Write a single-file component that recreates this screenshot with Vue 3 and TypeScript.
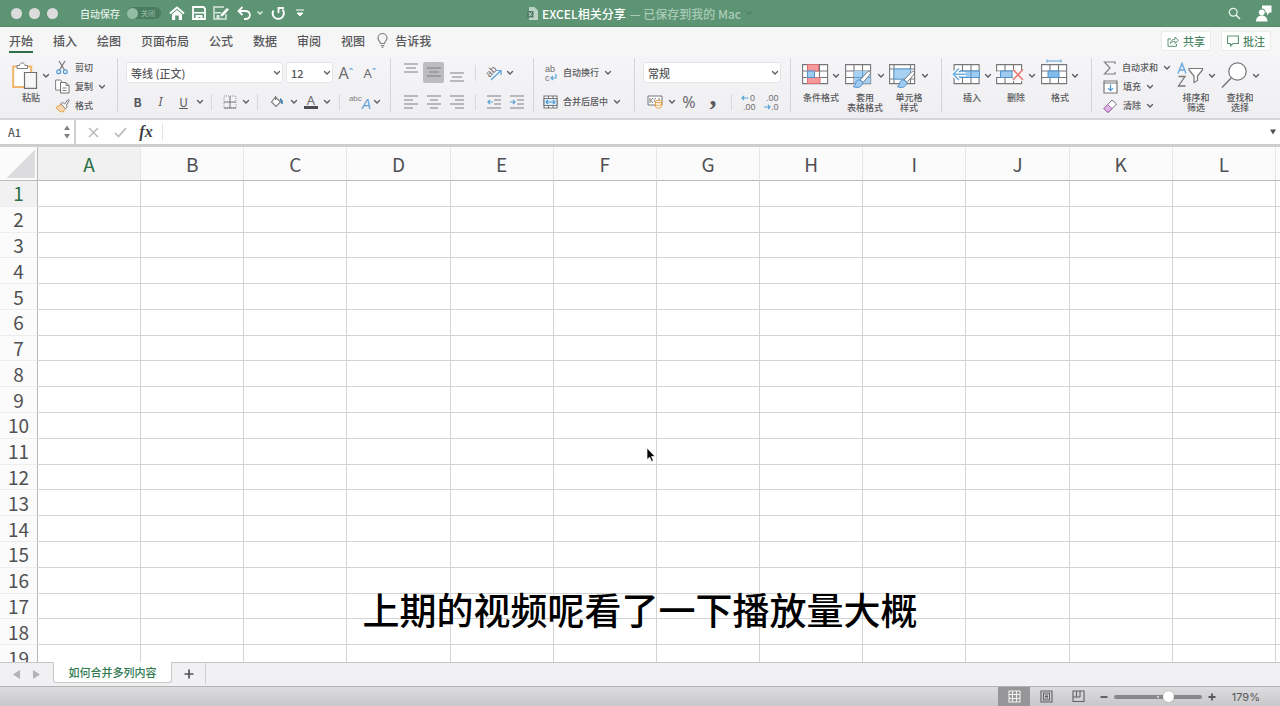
<script setup lang="ts">
import { h, ref } from 'vue'

interface Glyph {
  w: number
  h: number
  body: string
}

const grey = 'fill="none" stroke="#808083" stroke-width="1.2"'
const blue = 'fill="none" stroke="#5ba3d9" stroke-width="1.2"'
const white = 'fill="none" stroke="#fff" stroke-width="1.8"'
const table = `<path d="M.6 2.6h25v19h-25zM.6 9h25M.6 15.500h25M9 2.600v19M17.500 2.600v19" fill="#fff" stroke="#77777a" stroke-width="1.100"/>`
const brush = `<path d="M24.500 9.500c1.500 1 1 2-.5 4l-6 7-3-2.500 6.500-7c1.200-1.300 2-2.200 3-1.500z" fill="#fff" stroke="#77777a"/><path d="M15 18c-2.500-.5-4 1-4.200 3-.2 1.800-1 2.800-2.800 3.500 4 2 9 1 10-4z" fill="#9fcbf0" stroke="#4f94cc"/>`

const glyphs: Record<string, Glyph> = {
  chevron: { w: 8, h: 6, body: '<path d="M1.500 1.500 4 4l2.500-2.500" fill="none" stroke="#5c5c5f" stroke-width="1.300" stroke-linecap="round"/>' },
  chevronWhite: { w: 8, h: 6, body: '<path d="M1.500 1.500 4 4l2.500-2.500" fill="none" stroke="#e6f1ea" stroke-width="1.300"/>' },
  chevronDim: { w: 8, h: 6, body: '<path d="M1.500 1.500 4 4l2.500-2.500" fill="none" stroke="#4b8263" stroke-width="1.300"/>' },
  home: { w: 16, h: 14, body: '<path d="M1 7.500 8 1.500l7 6" fill="none" stroke="#fff" stroke-width="2"/><path d="M3 8.200 8 4l5 4.200V14H9.800V9.500H6.200V14H3z" fill="#fff"/>' },
  save: { w: 14, h: 14, body: `<path d="M1 1h10.500L13 2.500V13H1z" ${white}/><path d="M2 6h10v1.500H2zM3.500 9h7v4h-2v-2h-2v2h-3z" fill="#fff"/>` },
  saveEdit: { w: 17, h: 14, body: '<path d="M13 8v5H1V1h10" fill="none" stroke="#d7e8dd" stroke-width="1.500"/><path d="M2 6h6v1.500H2zM3.500 9h3v4h-3z" fill="#d7e8dd"/><path d="m7 11 .8-3L14 1.500l2.200 2.200-6.200 6.500z" fill="#fff" stroke="#5d9474" stroke-width=".6"/>' },
  undo: { w: 15, h: 14, body: `<path d="M5.500 1 1.500 5l4 4M1.500 5H8c6.500 0 6.500 8 .5 8H7" ${white}/>` },
  redo: { w: 15, h: 14, body: `<path d="M2.500 4.500C0 8.500 3 12.800 7 12.800c5.500 0 7.500-6 4.500-9.300M7.500 7V2h5.500" ${white}/>` },
  more: { w: 8, h: 8, body: '<path d="M0 1h8M1 4h6L4 7z" fill="#fff" stroke="#fff"/>' },
  file: { w: 11, h: 13, body: '<path d="M2 0h5.500L11 3.500V13H2z" fill="#b9d2c4"/><path d="M0 4h6.500v6.500H0z" fill="#537c65"/><path d="m2 5.500 2.500 3.500m0-3.500L2 9" stroke="#c8ddd0" fill="none"/>' },
  search: { w: 13, h: 13, body: '<circle cx="5.200" cy="5.200" r="3.900" fill="none" stroke="#e9f3ed" stroke-width="1.300"/><path d="m8 8 4 4" stroke="#e9f3ed" stroke-width="1.600"/>' },
  person: { w: 16, h: 17, body: '<path d="M6 .500h9.500v7h-2L11 10.500v-3H9.500C9.500 4.500 8 3.500 6 3.500z" fill="#fff"/><circle cx="5.800" cy="7.300" r="2.900" fill="#fff"/><path d="M0 16.500c0-8 11.500-8 11.500 0z" fill="#fff"/>' },
  bulb: { w: 11, h: 15, body: `<path d="M3.500 10.500C3.500 8 1 8 1 5a4.500 4.500 0 0 1 9 0c0 3-2.500 3-2.500 5.500zM3.700 12.500h3.600M4.500 14.200h2" ${grey}/>` },
  share: { w: 12, h: 11, body: '<path d="M4 3H1v7.300h8.500V8" fill="none" stroke="#5f9375"/><path d="M3.500 7.500c.3-3 2-4.200 4.500-4.200V1l3.500 3.500L8 7.500V5.400c-2 0-3.300.4-4.500 2.100z" fill="none" stroke="#5f9375"/>' },
  comment: { w: 12, h: 12, body: '<path d="M.600 1h10.800v7.500H6L3.500 11V8.500H.600z" fill="none" stroke="#5f9375" stroke-width="1.100"/>' },
  paste: { w: 26, h: 27, body: '<path d="M1.200 4.500h18V25h-18z" fill="#fff" stroke="#efb568" stroke-width="2"/><path d="M5 6.500v-3h2.500C8 0 12.500 0 13 3.500h2.500v3z" fill="#fff" stroke="#808083"/><path d="M12.500 10.500h12v15.800h-12z" fill="#f7f7f8" stroke="#707073" stroke-width="1.200"/>' },
  cut: { w: 15, h: 15, body: '<path d="m4 1 5.500 9M10 1l-5.500 9" fill="none" stroke="#77777a" stroke-width="1.200"/><circle cx="3.700" cy="11.700" r="1.900" fill="none" stroke="#4e98d2" stroke-width="1.200"/><circle cx="10.300" cy="11.700" r="1.900" fill="none" stroke="#4e98d2" stroke-width="1.200"/>' },
  copy: { w: 15, h: 15, body: '<path d="M.600 1h5l1 1v9h-6z" fill="#fff" stroke="#808083"/><path d="M5.500 3.500h5.500l3 3V14H5.500z" fill="#fff" stroke="#707073"/><path d="M11 3.500v3h3M7.500 9h4M7.500 11.500h4" fill="none" stroke="#808083"/>' },
  painter: { w: 15, h: 15, body: '<path d="m1 9.500 5.500-3.500 4 4.500L8 14c-2 0-4.500-1-7-4.500z" fill="#f9d9ab" stroke="#e6a14e"/><path d="m5.700 5.700 2-1.200 2 1.500L13 1.500l1.200 1L11.500 7l.5 2.200-1.500 1.500z" fill="#fff" stroke="#77777a"/>' },
  borders: { w: 14, h: 14, body: `<path d="M1 1h12v12H1z" fill="none" stroke="#999" stroke-dasharray="1 1"/><path d="M1 13h12M7 1v12M1 7h12" fill="none" stroke="#77777a"/>` },
  bucket: { w: 14, h: 13, body: '<path d="m5.500 2 5 5-4.500 4.500L1.500 7zM5.500 5V1" fill="#fff" stroke="#77777a" stroke-width="1.100"/><path d="M10.500 3.500c2 1.500 2.200 4 1.700 5.500L11 6.500z" fill="#3d80b8" stroke="#3d80b8"/>' },
  top: { w: 14, h: 11, body: `<path d="M0 1h14M2 5h10M0 9h14" ${grey}/>` },
  left: { w: 14, h: 14, body: `<path d="M0 1h14M0 5h9M0 9h14M0 13h9" ${grey}/>` },
  center: { w: 14, h: 14, body: `<path d="M0 1h14M3 5h8M0 9h14M3 13h8" ${grey}/>` },
  right: { w: 14, h: 14, body: `<path d="M0 1h14M5 5h9M0 9h14M5 13h9" ${grey}/>` },
  outdent: { w: 14, h: 14, body: `<path d="M0 1h14M7 5h7M7 9h7M0 13h14" ${grey}/><path d="M6 7H1m2-2L1 7l2 2" ${blue}/>` },
  indent: { w: 14, h: 14, body: `<path d="M0 1h14M7 5h7M7 9h7M0 13h14" ${grey}/><path d="M0 7h5M3 5l2 2-2 2" ${blue}/>` },
  orient: { w: 18, h: 18, body: '<text x="1" y="11" transform="rotate(-45 6 8)" font-family="Liberation Sans" font-size="10" fill="#707073">ab</text><path d="m6 16 9.500-9M11.500 6.500h4.500V11" fill="none" stroke="#5ba3d9" stroke-width="1.200"/>' },
  wrap: { w: 15, h: 20, body: '<text x="2" y="9" font-family="Liberation Sans" font-size="9" fill="#707073">ab</text><text x="2" y="18" font-family="Liberation Sans" font-size="9" fill="#707073">c</text><path d="M13 11v4H8m2-2-2 2 2 2" fill="none" stroke="#5ba3d9" stroke-width="1.200"/>' },
  merge: { w: 15, h: 14, body: '<path d="M1 1h13v12H1zM5.500 1v2.500M10 1v2.500M5.500 10.500V13M10 10.500V13" fill="#fff" stroke="#77777a" stroke-width="1.100"/><path d="M1 3.500h13v7H1z" fill="#dceefb" stroke="#77777a"/><path d="M3 7h9M5 5 3 7l2 2m5-4 2 2-2 2" fill="none" stroke="#4e98d2" stroke-width="1.100"/>' },
  currency: { w: 17, h: 15, body: '<path d="M1 2h14v9H1z" fill="#fff" stroke="#77777a"/><path d="M3 4v5M6 4 4 6.500 6 9M9 4c-2 1-2 4 0 5M12 4v5" fill="none" stroke="#77777a"/><path d="M8.500 7.500v5c0 2 6 2 6 0v-5" fill="#fff5e6" stroke="#e8a04d"/><ellipse cx="11.500" cy="7.500" rx="3" ry="1.300" fill="#fff5e6" stroke="#e8a04d"/><path d="M8.500 10c0 2 6 2 6 0" fill="none" stroke="#e8a04d"/>' },
  decMore: { w: 16, h: 20, body: '<text x="9" y="9" font-family="Liberation Sans" font-size="9" fill="#707073">0</text><text x="2" y="18" font-family="Liberation Sans" font-size="9" fill="#707073">.00</text><path d="M7.500 6H1m2-2L1 6l2 2" fill="none" stroke="#5ba3d9" stroke-width="1.200"/>' },
  decLess: { w: 16, h: 20, body: '<text x="2" y="9" font-family="Liberation Sans" font-size="9" fill="#707073">.00</text><text x="7" y="18" font-family="Liberation Sans" font-size="9" fill="#707073">.0</text><path d="M0 15h6M4 13l2 2-2 2" fill="none" stroke="#5ba3d9" stroke-width="1.200"/>' },
  conditional: { w: 26, h: 27, body: `${table}<path d="M5.500 2.600h11V9h-11zM5.500 15.500H18v6H5.500z" fill="#f5999b" stroke="#dd6e72"/><path d="M5.500 9h7v6.500h-7z" fill="#9fcbf0" stroke="#4f94cc"/>` },
  tableStyle: { w: 28, h: 27, body: `${table}<path d="M9 9h16.500v12.500H9z" fill="#a8d0f2"/><path d="M9 15.500h16.500M17.500 9v12.500" stroke="#5ba3d9" fill="none"/>${brush}` },
  cellStyle: { w: 28, h: 27, body: `<path d="M.600 2.600h25v19h-25zM.600 7h25M.600 17h25M5 2.600v19M21.500 2.600v19" fill="#fff" stroke="#77777a" stroke-width="1.100"/><path d="M5 7h16.500v10H5z" fill="#a8d0f2" stroke="#5ba3d9"/>${brush}` },
  insert: { w: 28, h: 27, body: '<g transform="translate(1.500)">' + table + '<path d="M6 9h20v6.500H6z" fill="#9fcbf0" stroke="#4f94cc"/><path d="M17.500 9v6.500" stroke="#4f94cc"/></g><path d="M14 12.200H1.500M7 6.500l-5.700 5.700L7 18" fill="none" stroke="#fff" stroke-width="4"/><path d="M14 12.200H1.500M7 6.500l-5.700 5.700L7 18" fill="none" stroke="#6fb0e2" stroke-width="1.500"/>' },
  remove: { w: 28, h: 27, body: `${table}<path d="M0 9.500h4v5.500H0z" fill="#f4f3f5"/><path d="M4.500 9h11.500v6.500H4.500z" fill="#9fcbf0" stroke="#4f94cc"/><path d="M17 8h11v11H17z" fill="#f7f6f8"/><path d="m17 7.500 10 10.500M27 7.500 17 18" stroke="#e8766f" stroke-width="1.500"/>` },
  format: { w: 26, h: 27, body: `${table}<path d="M7 9h11v6.500H7z" fill="#82bcec" stroke="#4f94cc"/><path d="M6-2.500v3M20-2.500v3M6-1h14" stroke="#5ba3d9" fill="none"/>` },
  sum: { w: 14, h: 14, body: `<path d="M12 3V1H1.500l5.500 6-5.500 6H12v-2" ${grey}/>` },
  fill: { w: 15, h: 14, body: '<path d="M1 1h13v12H1z" fill="#fff" stroke="#77777a" stroke-width="1.200"/><path d="M1 3h13" stroke="#77777a"/><path d="M7.500 4.500v6M5 8.200l2.500 2.500L10 8.200" fill="none" stroke="#4e98d2" stroke-width="1.200"/>' },
  clear: { w: 15, h: 14, body: '<path d="m9 1 4.500 4L6 13H4L1 9.500z" fill="#fff" stroke="#77777a"/><path d="M4.500 5.500 9 9.500 5.700 13H4L1 9.500z" fill="#deb4e3" stroke="#ae68b7"/>' },
  sort: { w: 27, h: 27, body: '<path d="m1 11.500 4-10 4 10M2.500 8h5" fill="none" stroke="#6aaade" stroke-width="1.400"/><path d="M1.500 14.500H8L1.500 24H8.500" fill="none" stroke="#77777a" stroke-width="1.300"/><path d="M12 6.500h13.500v1.500L20.500 14v4.500L17 20.500V14L12 8z" fill="#fff" stroke="#77777a" stroke-width="1.200"/>' },
  find: { w: 27, h: 27, body: '<circle cx="16.500" cy="9.500" r="8.700" fill="#fff" stroke="#77777a" stroke-width="1.200"/><path d="M10.200 16 1 25.500" stroke="#77777a" stroke-width="1.500"/>' },
  cancel: { w: 11, h: 11, body: '<path d="m1 1 9 9m0-9-9 9" fill="none" stroke="#b9b9bb" stroke-width="1.500"/>' },
  check: { w: 13, h: 11, body: '<path d="m1 6 3.500 3.500L12 1" fill="none" stroke="#b9b9bb" stroke-width="1.600"/>' },
  spin: { w: 6, h: 14, body: '<path d="M0 5 3 .500 6 5zM0 9l3 4.500L6 9z" fill="#808083"/>' },
  down: { w: 6, h: 6, body: '<path d="M0 .500h6L3 5.500z" fill="#505053"/>' },
  prev: { w: 7, h: 9, body: '<path d="M7 0v9L0 4.500z" fill="#b3b3b5"/>' },
  next: { w: 7, h: 9, body: '<path d="M0 0v9l7-4.500z" fill="#b3b3b5"/>' },
  plus: { w: 10, h: 10, body: '<path d="M5 .500v9M.500 5h9" stroke="#555558" stroke-width="1.700"/>' },
  plusSmall: { w: 8, h: 8, body: '<path d="M4 .500v7M.500 4h7" stroke="#58585b" stroke-width="1.800"/>' },
  minusSmall: { w: 8, h: 8, body: '<path d="M.500 4h7" stroke="#58585b" stroke-width="1.800"/>' },
  gridView: { w: 13, h: 13, body: '<path d="M1 1h11v11H1zM4.500 1v11M8.500 1v11M1 4.500h11M1 8.500h11" fill="none" stroke="#f2f2f2" stroke-width="1.100"/>' },
  pageView: { w: 13, h: 13, body: '<path d="M1 1h11v11H1zM3.500 3h6v7h-6zM5 5h3M5 6.500h3M5 8h3" fill="none" stroke="#606063" stroke-width="1.100"/>' },
  breakView: { w: 13, h: 13, body: '<path d="M1 1h11v10.500H1zM4.500 1v6M8 1v6M1 7h7" fill="none" stroke="#606063" stroke-width="1.100"/>' },
  pointer: { w: 10, h: 16, body: '<path d="M1 1v11.500l2.700-2.300L5.500 14.500l1.800-.8L5.500 9.500H9z" fill="#000" stroke="#fff" stroke-width=".700"/>' }
}

const Icon = (props: { name: string }) => {
  const g = glyphs[props.name]
  return h('svg', {
    width: g.w,
    height: g.h,
    viewBox: `0 0 ${g.w} ${g.h}`,
    'aria-hidden': 'true',
    innerHTML: g.body
  })
}
Icon.props = ['name']

interface Big {
  icon: string
  lines: string[]
}

const tabs = ['开始', '插入', '绘图', '页面布局', '公式', '数据', '审阅', '视图']
const activeTab = ref('开始')
const clip = [
  { icon: 'cut', label: '剪切', menu: false },
  { icon: 'copy', label: '复制', menu: true },
  { icon: 'painter', label: '格式', menu: false }
]
const edits = [
  { icon: 'sum', label: '自动求和' },
  { icon: 'fill', label: '填充' },
  { icon: 'clear', label: '清除' }
]
const styles: Big[] = [
  { icon: 'conditional', lines: ['条件格式'] },
  { icon: 'tableStyle', lines: ['套用', '表格格式'] },
  { icon: 'cellStyle', lines: ['单元格', '样式'] }
]
const cells: Big[] = [
  { icon: 'insert', lines: ['插入'] },
  { icon: 'remove', lines: ['删除'] },
  { icon: 'format', lines: ['格式'] }
]
const finders: Big[] = [
  { icon: 'sort', lines: ['排序和', '筛选'] },
  { icon: 'find', lines: ['查找和', '选择'] }
]
const columns = 'ABCDEFGHIJKL'.split('')
const selected = ref({ col: 'A', row: 1 })
const autosave = ref(false)
const cellName = ref('A1')
const formula = ref('')
const zoom = ref(63)
</script>

<template>
  <div class="window">
    <header class="titlebar">
      <div class="title-left">
        <div class="lights"><i></i><i></i><i></i></div>
        <label class="autosave">
          <span>自动保存</span>
          <input v-model="autosave" type="checkbox">
          <span class="switch">关闭</span>
        </label>
        <div class="quick">
          <button aria-label="主页"><Icon name="home" /></button>
          <button aria-label="保存"><Icon name="save" /></button>
          <button aria-label="另存为"><Icon name="saveEdit" /></button>
          <button aria-label="撤销"><Icon name="undo" /></button>
          <button aria-label="撤销列表"><Icon name="chevronWhite" /></button>
          <button aria-label="重做"><Icon name="redo" /></button>
          <button aria-label="自定义"><Icon name="more" /></button>
        </div>
      </div>
      <div class="doc">
        <Icon name="file" />
        <strong>EXCEL相关分享</strong>
        <span>— 已保存到我的 Mac</span>
        <Icon name="chevronDim" />
      </div>
      <div class="title-right">
        <button aria-label="搜索"><Icon name="search" /></button>
        <button aria-label="帐户"><Icon name="person" /></button>
      </div>
    </header>

    <nav class="tabs">
      <button v-for="t in tabs" :key="t" :class="{ active: t === activeTab }" @click="activeTab = t">{{ t }}</button>
      <button class="tell"><Icon name="bulb" />告诉我</button>
      <div class="tab-actions">
        <button><Icon name="share" />共享</button>
        <button><Icon name="comment" />批注</button>
      </div>
    </nav>

    <section class="ribbon">
      <div class="group clipboard">
        <button class="big">
          <span class="big-icon"><Icon name="paste" /><Icon name="chevron" /></span>
          <span>粘贴</span>
        </button>
        <div class="stack">
          <button v-for="c in clip" :key="c.label" class="line">
            <Icon :name="c.icon" /><span>{{ c.label }}</span><Icon v-if="c.menu" name="chevron" />
          </button>
        </div>
      </div>

      <div class="group rows">
        <div class="row fields">
          <div class="field">
            <select aria-label="字体"><option>等线 (正文)</option></select>
            <Icon name="chevron" />
          </div>
          <div class="field">
            <select aria-label="字号"><option>12</option></select>
            <Icon name="chevron" />
          </div>
          <button class="grow" aria-label="增大字号">A<sup>ˆ</sup></button>
          <button class="shrink" aria-label="减小字号">A<sup>ˇ</sup></button>
        </div>
        <div class="row font-row">
          <button class="bold">B</button>
          <button class="italic">I</button>
          <button class="under">U</button>
          <button aria-label="下划线选项"><Icon name="chevron" /></button>
          <i class="rule"></i>
          <button aria-label="边框"><Icon name="borders" /></button>
          <button aria-label="边框选项"><Icon name="chevron" /></button>
          <i class="rule"></i>
          <button aria-label="填充颜色"><Icon name="bucket" /></button>
          <button aria-label="填充颜色选项"><Icon name="chevron" /></button>
          <button class="ink">A</button>
          <button aria-label="字体颜色选项"><Icon name="chevron" /></button>
          <i class="rule"></i>
          <button class="phonetic"><span>abc</span><em>A</em></button>
          <button aria-label="拼音选项"><Icon name="chevron" /></button>
        </div>
      </div>

      <div class="group rows">
        <div class="row align-row">
          <button class="v-top" aria-label="顶端对齐"><Icon name="top" /></button>
          <button class="pressed" aria-label="垂直居中"><Icon name="top" /></button>
          <button class="v-bottom" aria-label="底端对齐"><Icon name="top" /></button>
          <i class="rule"></i>
          <button aria-label="方向"><Icon name="orient" /></button>
          <button class="menu" aria-label="方向选项"><Icon name="chevron" /></button>
        </div>
        <div class="row align-row">
          <button aria-label="左对齐"><Icon name="left" /></button>
          <button aria-label="居中"><Icon name="center" /></button>
          <button aria-label="右对齐"><Icon name="right" /></button>
          <i class="rule"></i>
          <button aria-label="减少缩进"><Icon name="outdent" /></button>
          <button aria-label="增加缩进"><Icon name="indent" /></button>
        </div>
      </div>

      <div class="group rows">
        <div class="row"><button class="line"><Icon name="wrap" /><span>自动换行</span><Icon name="chevron" /></button></div>
        <div class="row"><button class="line"><Icon name="merge" /><span>合并后居中</span><Icon name="chevron" /></button></div>
      </div>

      <div class="group rows">
        <div class="row format-row">
          <div class="field">
            <select aria-label="数字格式"><option>常规</option></select>
            <Icon name="chevron" />
          </div>
        </div>
        <div class="row number-row">
          <button aria-label="货币"><Icon name="currency" /></button>
          <button aria-label="货币选项"><Icon name="chevron" /></button>
          <button class="percent">%</button>
          <button class="comma">,</button>
          <i class="rule"></i>
          <button aria-label="增加小数位"><Icon name="decMore" /></button>
          <button aria-label="减少小数位"><Icon name="decLess" /></button>
        </div>
      </div>

      <div class="group bigs">
        <button v-for="b in styles" :key="b.icon" class="big">
          <span class="big-icon"><Icon :name="b.icon" /><Icon name="chevron" /></span>
          <span v-for="l in b.lines" :key="l">{{ l }}</span>
        </button>
      </div>

      <div class="group bigs">
        <button v-for="b in cells" :key="b.icon" class="big">
          <span class="big-icon"><Icon :name="b.icon" /><Icon name="chevron" /></span>
          <span v-for="l in b.lines" :key="l">{{ l }}</span>
        </button>
      </div>

      <div class="group editing">
        <div class="stack">
          <button v-for="e in edits" :key="e.label" class="line">
            <Icon :name="e.icon" /><span>{{ e.label }}</span><Icon name="chevron" />
          </button>
        </div>
        <button v-for="b in finders" :key="b.icon" class="big">
          <span class="big-icon"><Icon :name="b.icon" /><Icon name="chevron" /></span>
          <span v-for="l in b.lines" :key="l">{{ l }}</span>
        </button>
      </div>
    </section>

    <section class="formula">
      <div class="name-box">
        <input v-model="cellName" aria-label="名称框">
        <button aria-label="切换"><Icon name="spin" /></button>
      </div>
      <button aria-label="取消"><Icon name="cancel" /></button>
      <button aria-label="输入"><Icon name="check" /></button>
      <button class="fx">fx</button>
      <input v-model="formula" class="formula-input" aria-label="编辑栏">
      <button aria-label="展开"><Icon name="down" /></button>
    </section>

    <main class="sheet">
      <table>
        <colgroup>
          <col class="head-col">
          <col v-for="c in columns" :key="c">
          <col class="edge-col">
        </colgroup>
        <thead>
          <tr>
            <th class="corner"></th>
            <th v-for="c in columns" :key="c" scope="col" :class="{ current: c === selected.col }">{{ c }}</th>
            <th class="edge"></th>
          </tr>
        </thead>
        <tbody>
          <tr v-for="r in 19" :key="r">
            <th scope="row" :class="{ current: r === selected.row }">{{ r }}</th>
            <td v-for="c in columns" :key="c" @click="selected = { col: c, row: r }"></td>
            <td class="edge"></td>
          </tr>
        </tbody>
      </table>
    </main>

    <section class="sheet-tabs">
      <button class="arrow" aria-label="上一张"><Icon name="prev" /></button>
      <button class="arrow" aria-label="下一张"><Icon name="next" /></button>
      <button class="sheet-tab">如何合并多列内容</button>
      <button class="add" aria-label="新建工作表"><Icon name="plus" /></button>
    </section>

    <footer class="status">
      <button class="view on" aria-label="普通"><Icon name="gridView" /></button>
      <button class="view" aria-label="页面布局"><Icon name="pageView" /></button>
      <button class="view" aria-label="分页预览"><Icon name="breakView" /></button>
      <button class="step" aria-label="缩小"><Icon name="minusSmall" /></button>
      <input v-model="zoom" type="range" min="0" max="100" aria-label="缩放">
      <button class="step" aria-label="放大"><Icon name="plusSmall" /></button>
      <output>179%</output>
    </footer>

    <p class="caption">上期的视频呢看了一下播放量大概</p>
    <Icon class="pointer" name="pointer" />
  </div>
</template>

<style>
body {
  margin: 0;
}
</style>

<style scoped>
.window {
  position: relative;
  display: flex;
  flex-direction: column;
  height: 100vh;
  overflow: hidden;
  background: #fff;
  color: #58585b;
  font-family: "Noto Sans CJK SC", sans-serif;
  font-size: 9px;
  font-weight: 500;
}
.window * {
  box-sizing: border-box;
}
svg {
  display: block;
  flex: none;
  overflow: visible;
}
button {
  display: flex;
  align-items: center;
  justify-content: center;
  margin: 0;
  padding: 0;
  border: 0;
  background: none;
  color: inherit;
  font: inherit;
  white-space: nowrap;
}
input,
select {
  min-width: 0;
  margin: 0;
  border: 0;
  outline: 0;
  background: none;
  color: inherit;
  font: inherit;
}

/* title bar */
.titlebar {
  display: grid;
  grid-template-columns: 1fr auto 1fr;
  align-items: center;
  height: 27px;
  flex: none;
  background: #5d9474;
  border-bottom: 1px solid #568b6d;
  color: #fff;
}
.title-left,
.lights,
.autosave,
.doc,
.title-right {
  display: flex;
  align-items: center;
}
.lights {
  gap: 7px;
  padding-left: 11px;
}
.lights i {
  width: 11px;
  height: 11px;
  border-radius: 50%;
  background: #dcdcdc;
}
.autosave {
  gap: 7px;
  margin-left: 22px;
  font-size: 10px;
  color: #e4f0e9;
}
.autosave input {
  position: absolute;
  opacity: 0;
}
.switch {
  display: flex;
  align-items: center;
  gap: 3px;
  width: 34px;
  height: 12px;
  border-radius: 6px;
  background: #4a7d60;
  color: #8db59d;
  font-size: 7px;
}
.switch::before {
  content: "";
  width: 11px;
  height: 11px;
  border-radius: 50%;
  background: #93bda4;
}
.quick {
  display: grid;
  grid-template-columns: 22px 22px 23px 22px 10px 26px 18px;
  margin-left: 5px;
}
.doc {
  gap: 4px;
  font-size: 12px;
}
.doc strong {
  font-weight: 500;
}
.doc span {
  color: #a9cbb7;
}
.title-right {
  justify-content: flex-end;
  gap: 15px;
  padding-right: 8px;
}

/* tabs */
.tabs {
  display: flex;
  align-items: center;
  gap: 20px;
  height: 28px;
  flex: none;
  padding: 0 9px;
  background: #f6f6f6;
  font-size: 12px;
}
.tabs > button {
  height: 24px;
  border-bottom: 2px solid transparent;
}
.tabs > button.active {
  border-bottom-color: #2f6e4c;
}
.tabs > .tell {
  gap: 7px;
  margin-left: -8px;
}
.tab-actions {
  display: flex;
  gap: 10px;
  margin-left: auto;
}
.tab-actions button {
  gap: 4px;
  width: 50px;
  height: 20px;
  border: 1px solid #ebebeb;
  border-radius: 2px;
  background: #fff;
  color: #4a8565;
  font-size: 11px;
}

/* ribbon */
.ribbon {
  display: grid;
  grid-template-columns: 118px 273px 143px 101px 156px 151px 150px 1fr;
  height: 65px;
  flex: none;
  padding: 3px 0;
  background: linear-gradient(#f5f4f6, #efeef1);
  border-bottom: 2px solid #d6d5d8;
}
.group {
  display: flex;
  height: 54px;
  border-right: 1px solid #d5d4d7;
}
.group:last-child {
  border-right: 0;
}
.rows {
  flex-direction: column;
  padding-left: 8px;
}
.row {
  display: grid;
  align-items: center;
  justify-items: center;
  justify-content: start;
  height: 29px;
  flex: none;
}
.rule {
  width: 1px;
  height: 16px;
  background: #d9d8db;
}
.fields {
  grid-template-columns: 157px 47px 20px 22px;
  column-gap: 3px;
}
.font-row {
  grid-template-columns: 23px 23px 23px 9px 15px 22px 9px 15px 24px 10px 24px 8px 17px 24px 9px;
}
.align-row {
  grid-template-columns: 23px 23px 23px 14px 24px 22px;
}
.align-row .menu {
  justify-self: start;
}
.format-row {
  grid-template-columns: 138px;
}
.number-row {
  grid-template-columns: 24px 9px 26px 22px 14px 22px 24px;
}
.field {
  position: relative;
  width: 100%;
}
.field select {
  appearance: none;
  display: block;
  width: 100%;
  height: 21px;
  padding: 0 4px;
  border: 1px solid #e4e3e6;
  border-radius: 3px;
  background: #fff;
  font-size: 11px;
}
.field svg {
  position: absolute;
  top: 8px;
  right: 2px;
  pointer-events: none;
}
.grow,
.shrink,
.ink,
.percent {
  color: #6c6c6f;
  font-family: "Noto Sans", sans-serif;
  font-weight: 400;
}
.grow {
  font-size: 16px;
}
.shrink {
  font-size: 13px;
}
.grow sup,
.shrink sup {
  color: #5ba3d9;
  font-size: 11px;
  line-height: 12px;
}
.bold,
.italic,
.under {
  font-size: 12px;
}
.bold {
  font-weight: 700;
}
.italic {
  font-family: "Noto Sans", sans-serif;
  font-style: italic;
  font-weight: 400;
}
.under {
  font-weight: 400;
  text-decoration: underline;
}
.ink {
  width: 14px;
  height: 15px;
  border-bottom: 3px solid #4b4b4e;
  font-size: 13px;
}
.phonetic {
  height: 18px;
  color: #808083;
  font-family: "Liberation Sans", sans-serif;
  font-size: 8px;
  font-weight: 400;
}
.phonetic span {
  align-self: flex-start;
  line-height: 12px;
}
.phonetic em {
  align-self: flex-end;
  color: #5ba3d9;
  font-size: 14px;
  line-height: 14px;
}
.pressed {
  width: 21px;
  height: 21px;
  border-radius: 2px;
  background: #bdbdbf;
}
.v-top {
  height: 20px;
  align-items: flex-start;
}
.v-bottom {
  height: 20px;
  align-items: flex-end;
}
.percent {
  font-size: 16px;
}
.comma {
  height: 16px;
  align-items: flex-start;
  font-family: "Liberation Serif", serif;
  font-size: 28px;
  font-weight: 700;
  line-height: 4px;
}
.line {
  gap: 5px;
  height: 20px;
}
.rows .line {
  padding-left: 1px;
}
.stack {
  display: flex;
  flex-direction: column;
  align-items: flex-start;
}
.stack .line {
  flex: none;
  height: 19px;
}
.big {
  flex: none;
  flex-direction: column;
  justify-content: flex-start;
  width: 44px;
  padding-top: 4px;
  line-height: 10px;
}
.big-icon {
  display: flex;
  align-items: center;
  gap: 4px;
  padding-bottom: 4px;
}
.clipboard {
  gap: 2px;
  padding-left: 9px;
}
.bigs {
  padding-left: 8px;
}
.editing {
  padding-left: 11px;
}
.editing .stack {
  width: 71px;
}

/* formula bar */
.formula {
  display: grid;
  grid-template-columns: 76px 34px 20px 32px 1fr 14px;
  align-items: center;
  height: 27px;
  flex: none;
  border-bottom: 3px solid #cecdcf;
}
.name-box {
  display: flex;
  align-items: center;
  height: 24px;
  padding: 0 4px 0 8px;
  border-right: 2px solid #cfced0;
  font-size: 11px;
}
.name-box input {
  flex: 1;
  padding: 0;
}
.fx {
  color: #3f3f42;
  font-family: "Liberation Serif", serif;
  font-size: 16px;
  font-style: italic;
  font-weight: 700;
}
.formula-input {
  height: 18px;
  border-left: 1px solid #e5e5e5;
  font-size: 11px;
}

/* grid */
.sheet {
  flex: 1;
  min-height: 0;
  overflow: hidden;
}
table {
  width: 100%;
  height: 524px;
  border-collapse: separate;
  border-spacing: 0;
  table-layout: fixed;
}
.head-col {
  width: 38px;
}
.edge-col {
  width: 4px;
}
th,
td {
  padding: 0;
  border-right: 1px solid #d3d3d4;
  border-bottom: 1px solid #d3d3d4;
}
th {
  background: #fbfbfb;
  color: #505053;
  font-size: 19px;
  font-weight: 400;
  line-height: 20px;
}
thead tr {
  height: 34px;
}
thead th {
  border-right-color: #e6e6e7;
  border-bottom-color: #bababc;
}
tbody th {
  border-right-color: #bababc;
  border-bottom-color: #ededee;
}
th.current {
  background: #f1f1f1;
  color: #2c7048;
}
thead th.corner {
  border-right-color: #bababc;
  background: linear-gradient(135deg, transparent 50%, #dcdbde 50%) 7px 3px / 28px 28px no-repeat #fbfbfb;
}
.edge {
  border-right: 0;
}

/* sheet tabs */
.sheet-tabs {
  display: flex;
  height: 24px;
  flex: none;
  padding-left: 6px;
  border-top: 1px solid #c6c5c8;
  background: #f1f0f2;
}
.arrow {
  width: 20px;
}
.sheet-tab {
  width: 119px;
  height: 21px;
  margin-top: -1px;
  margin-left: 7px;
  border: 1px solid #c9c8cb;
  border-top: 0;
  border-radius: 0 0 3px 3px;
  background: #fff;
  color: #2f7b52;
  font-size: 11px;
}
.add {
  width: 34px;
  height: 21px;
  border-right: 1px solid #cfced1;
}

/* status bar */
.status {
  display: flex;
  align-items: center;
  justify-content: flex-end;
  height: 20px;
  flex: none;
  padding-right: 20px;
  border-top: 1px solid #b2b1b3;
  background: linear-gradient(#dddcde, #c8c7c9);
}
.view {
  width: 32px;
  height: 100%;
}
.view.on {
  background: #969597;
}
.step {
  width: 20px;
}
.status input {
  appearance: none;
  width: 88px;
  height: 4px;
  border-radius: 2px;
  background: linear-gradient(#cfced0, #cfced0) center / 2px 2px no-repeat #88878a;
}
.status input::-webkit-slider-thumb {
  appearance: none;
  width: 11px;
  height: 11px;
  border-radius: 50%;
  background: #fff;
  box-shadow: 0 0 1px #707073;
}
.status output {
  width: 38px;
  text-align: right;
  font-family: Inter, sans-serif;
  font-size: 11px;
  font-weight: 400;
}

/* overlays */
.caption {
  position: absolute;
  right: 0;
  bottom: 70px;
  left: 0;
  margin: 0;
  color: #000;
  font-size: 37px;
  font-weight: 500;
  line-height: 54px;
  text-align: center;
  pointer-events: none;
}
.pointer {
  position: absolute;
  top: 447px;
  left: 646px;
}
</style>
